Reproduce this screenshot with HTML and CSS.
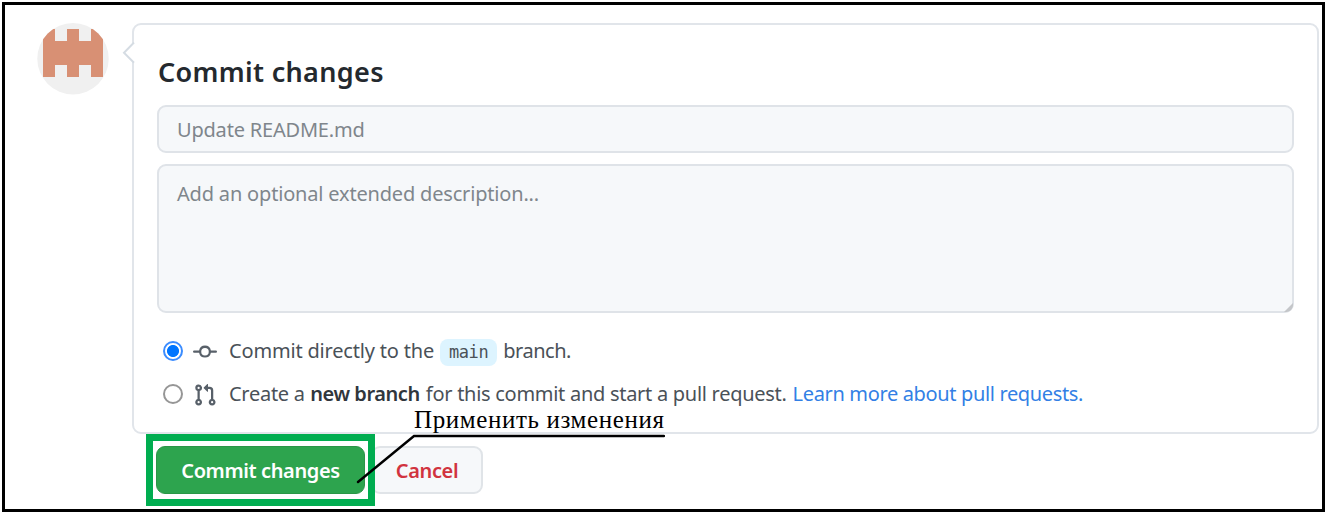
FILE: index.html
```html
<!DOCTYPE html>
<html lang="en">
<head>
<meta charset="utf-8">
<title>Commit changes</title>
<link rel="stylesheet" href="styles.css">
</head>
<body>
<main class="frame">
  <svg class="avatar" viewBox="0 0 72 72" aria-hidden="true">
    <defs><clipPath id="round"><circle cx="36" cy="35.7" r="35.7"/></clipPath></defs>
    <g clip-path="url(#round)">
      <rect width="72" height="72" fill="#f0f0f0"/>
      <path fill="#d89074" d="M6 6h12v12h12V6h12v12h12V6h12v48H54V42H42v12H30V42H18v12H6z"/>
    </g>
  </svg>
  <div class="column">
    <section class="card">
      <svg class="caret" viewBox="0 0 13 22" aria-hidden="true"><path d="M13 1v20L11.5 20.4 2 10.7 11.5 1z" fill="#fff"/><path d="M12 .5L2 10.7l10 10" fill="none" stroke="#d5dce3" stroke-width="2"/></svg>
      <h1 class="title"><span class="t-title">Commit changes</span></h1>
      <div class="field summary"><span class="t-summary">Update README.md</span></div>
      <div class="field description"><span class="t-description">Add an optional extended description...</span>
        <svg class="grip" viewBox="0 0 10 10" aria-hidden="true"><path d="M10 0v3q-1 6-7 7H0z" fill="#c4c6c9"/></svg>
      </div>
      <div class="option">
        <span class="radio checked"></span>
        <svg class="icon" viewBox="0 0 16 16" aria-hidden="true"><path fill-rule="evenodd" d="M10.5 7.75a2.5 2.5 0 11-5 0 2.5 2.5 0 015 0zm1.43.75a4.002 4.002 0 01-7.86 0H.75a.75.75 0 110-1.5h3.32a4.001 4.001 0 017.86 0h3.32a.75.75 0 110 1.5h-3.32z"/></svg>
        <p class="label"><span class="t-direct">Commit directly to the</span><code class="branch">main</code><span class="t-branch">branch.</span></p>
      </div>
      <div class="option">
        <span class="radio"></span>
        <svg class="icon" viewBox="0 0 16 16" aria-hidden="true"><path fill-rule="evenodd" d="M7.177 3.073L9.573.677A.25.25 0 0110 .854v4.792a.25.25 0 01-.427.177L7.177 3.427a.25.25 0 010-.354zM3.75 2.5a.75.75 0 100 1.5.75.75 0 000-1.5zm-2.25.75a2.25 2.25 0 113 2.122v5.256a2.251 2.251 0 11-1.5 0V5.372A2.25 2.25 0 011.5 3.25zM11 2.5h-1V4h1a1 1 0 011 1v5.628a2.251 2.251 0 101.5 0V5A2.5 2.5 0 0011 2.5zm1 10.25a.75.75 0 111.5 0 .75.75 0 01-1.5 0zM3.75 12a.75.75 0 100 1.5.75.75 0 000-1.5z"/></svg>
        <p class="label"><span class="t-create">Create a</span><b class="t-new">new branch</b><span class="t-pull">for this commit and start a pull request.</span><a class="t-link">Learn more about pull requests.</a></p>
      </div>
    </section>
    <div class="actions">
      <div class="button primary"><span class="t-commit">Commit changes</span></div>
      <div class="button cancel"><span class="t-cancel">Cancel</span></div>
    </div>
  </div>
  <div class="highlight"></div>
  <svg class="leader" viewBox="0 0 310 52" aria-hidden="true"><path d="M3 49L59 3H309" fill="none" stroke="#000" stroke-width="2.4" stroke-linecap="round"/></svg>
  <div class="callout">Применить изменения</div>
</main>
</body>
</html>
```
FILE: styles.css
```css
* { box-sizing: border-box; }
body { margin: 0; background: #fff; font: 20px/30px "Noto Sans", "Open Sans", sans-serif; color: #4a5158; }
.frame { position: relative; display: flex; align-items: flex-start; width: 1323px; height: 510px; margin: 2px; padding: 18px 3px 0 32px; border: 3px solid #000; white-space: nowrap; }
.avatar { width: 72px; height: 72px; flex: none; }
.column { flex: 1; margin-left: 23px; }
.card { position: relative; height: 411px; padding: 30px 23px 0; border: 2px solid #e1e5ea; border-radius: 9px; background: #fff; }
.caret { position: absolute; left: -12px; top: 17px; width: 13px; height: 22px; }
.title { margin: 0 0 17px; height: 33px; font-size: 27px; line-height: 33px; font-weight: 600; color: #24292e; }
.t-title { letter-spacing: .33px; margin-left: 1px; }
.field { position: relative; border: 2px solid #dfe3e8; border-radius: 9px; background: #f6f8fa; padding-left: 18px; color: #7f868c; }
.summary { height: 48px; line-height: 45px; }
.t-summary { letter-spacing: -.2px; }
.description { height: 149px; margin: 11px 0 21px; padding-top: 13px; }
.t-description { letter-spacing: -.18px; }
.grip { position: absolute; right: -1px; bottom: -1px; width: 9px; height: 9px; }
.option { display: flex; align-items: center; height: 34px; padding-left: 6px; margin-bottom: 9px; }
.radio { width: 20px; height: 20px; flex: none; border: 2px solid #969696; border-radius: 50%; background: #fff; }
.checked { border-color: #3b8cff; background: radial-gradient(circle, #0075ff 5.6px, #fff 6.4px); }
.icon { width: 24px; height: 24px; margin: 1px 12px 0 10px; fill: #586069; flex: none; }
.label { display: flex; align-items: center; margin: 0; }
.branch { height: 27px; width: 57px; margin: 3px 6px 0 6px; border-radius: 8px; background: #ddf4ff; text-align: center; font: 17px/27px "DejaVu Sans Mono", monospace; letter-spacing: -.4px; }
.t-direct { letter-spacing: -.18px; }
.t-branch { letter-spacing: -.45px; }
.t-create { letter-spacing: -.28px; }
.t-new { margin: 0 6px 0 5.5px; font-weight: 600; color: #30363c; letter-spacing: -.43px; }
.t-pull { letter-spacing: -.28px; }
.t-link { margin-left: 6px; color: #327fe5; letter-spacing: -.35px; }
.actions { display: flex; gap: 6px; margin: 12px 0 0 24px; }
.button { height: 48px; border-radius: 9px; text-align: center; line-height: 48px; font-weight: 600; }
.primary { width: 209px; background: #2da44e; border: 1px solid #2a9647; line-height: 47px; color: #fff; letter-spacing: -.38px; }
.cancel { width: 112px; background: #f6f8fa; border: 2px solid #e0e4e8; line-height: 46px; color: #d1333e; letter-spacing: -.35px; }
.highlight { position: absolute; left: 141px; top: 429px; width: 229px; height: 72px; border: 7px solid #00ad50; }
.leader { position: absolute; left: 350px; top: 428px; width: 310px; height: 52px; }
.callout { position: absolute; left: 409px; top: 400px; font: 25px/30px "Liberation Serif", serif; letter-spacing: .62px; color: #000; }
```
